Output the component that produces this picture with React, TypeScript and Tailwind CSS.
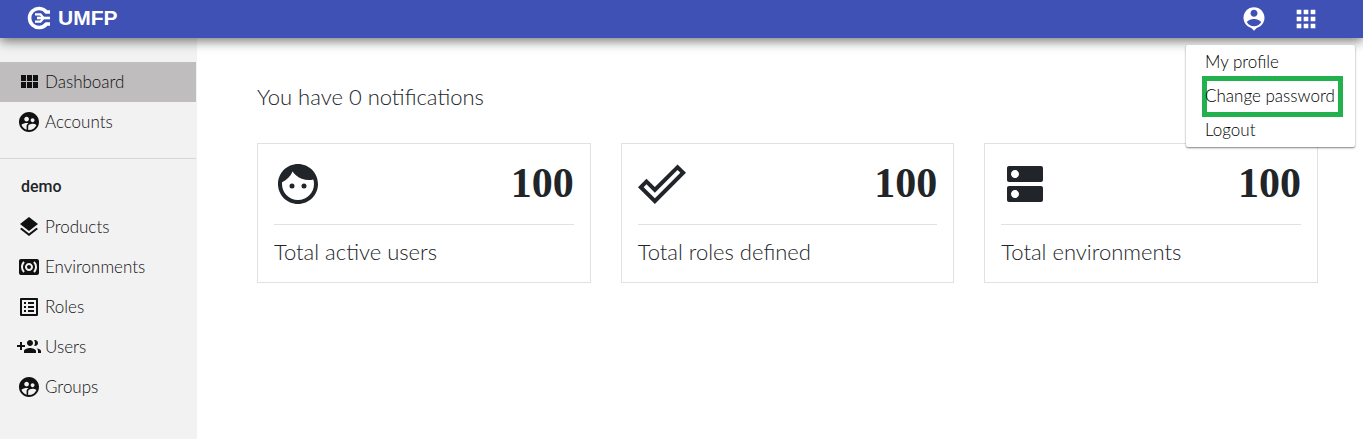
import type { ReactNode } from 'react'
import {
  MdApps,
  MdDns,
  MdDoneOutline,
  MdFace,
  MdLayers,
  MdListAlt,
  MdSupervisedUserCircle,
  MdSurroundSound,
} from 'react-icons/md'

interface NavItem {
  label: string
  icon: ReactNode
  active?: boolean
}

/** Wraps a single 24x24 glyph path */
function Glyph({ d, size }: { d: string; size: number }) {
  return (
    <svg viewBox="0 0 24 24" width={size} height={size} fill="currentColor" aria-hidden="true">
      <path d={d} />
    </svg>
  )
}

const GRID_PATH =
  'M4 11h5V5H4v6zm0 7h5v-6H4v6zm6 0h5v-6h-5v6zm6 0h5v-6h-5v6zm-6-7h5V5h-5v6zm6-6v6h5V5h-5z'
const GROUP_ADD_PATH =
  'M8 10H5V7H3v3H0v2h3v3h2v-3h3v-2zm10 1c1.66 0 2.99-1.34 2.99-3S19.66 5 18 5c-.32 0-.63.05-.91.14.57.81.9 1.79.9 2.86s-.34 2.04-.9 2.86c.28.09.59.14.91.14zm-5 0c1.66 0 2.99-1.34 2.99-3S14.66 5 13 5c-1.66 0-3 1.34-3 3s1.34 3 3 3zm6.62 2.16c.83.73 1.38 1.66 1.38 2.84v2h3v-2c0-1.54-2.37-2.49-4.38-2.84zM13 13c-2 0-6 1-6 3v2h12v-2c0-2-4-3-6-3z'
const PROFILE_PATH =
  'M12 2c-4.97 0-9 4.03-9 9 0 4.17 2.84 7.67 6.69 8.69L12 22l2.31-2.31C18.16 18.67 21 15.17 21 11c0-4.97-4.03-9-9-9zm0 2c1.66 0 3 1.34 3 3s-1.34 3-3 3-3-1.34-3-3 1.34-3 3-3zm0 14.3c-2.5 0-4.71-1.28-6-3.22.03-1.99 4-3.08 6-3.08 1.99 0 5.97 1.09 6 3.08-1.29 1.94-3.5 3.22-6 3.22z'

const MAIN_NAV: NavItem[] = [
  { label: 'Dashboard', icon: <Glyph d={GRID_PATH} size={24} />, active: true },
  { label: 'Accounts',  icon: <MdSupervisedUserCircle size={24} /> },
]

const DEMO_NAV: NavItem[] = [
  { label: 'Products',     icon: <MdLayers size={24} /> },
  { label: 'Environments', icon: <MdSurroundSound size={24} /> },
  { label: 'Roles',        icon: <MdListAlt size={24} /> },
  { label: 'Users',        icon: <Glyph d={GROUP_ADD_PATH} size={24} /> },
  { label: 'Groups',       icon: <MdSupervisedUserCircle size={24} /> },
]

const STATS = [
  { label: 'Total active users',  value: 100, icon: <MdFace size={48} /> },
  { label: 'Total roles defined', value: 100, icon: <MdDoneOutline size={48} /> },
  { label: 'Total environments',  value: 100, icon: <MdDns size={48} /> },
]

/** Open ring with a spanner head inside */
function Logo() {
  return (
    <svg viewBox="0 0 24 24" width="24" height="24" fill="none" stroke="currentColor" aria-hidden="true">
      <path d="M23 6H19.400A9.500 9.500 0 1 0 19.400 18H23" strokeWidth="3.600" />
      <path d="M8 8.400h5.500L16.500 12L13.500 15.600H8" strokeWidth="2.200" />
      <path d="M10 12h13" strokeWidth="2.600" />
    </svg>
  )
}

function NavList({ items }: { items: NavItem[] }) {
  return (
    <ul>
      {items.map(({ label, icon, active }) => (
        <li key={label}>
          <a
            href="#"
            aria-current={active ? 'page' : undefined}
            className={[
              'flex h-10 items-center gap-1 pl-[17px] text-[17px] text-[#111111]',
              active ? 'bg-[#bfbdbd]' : 'hover:bg-gray-200',
            ].join(' ')}
          >
            {icon}
            {label}
          </a>
        </li>
      ))}
    </ul>
  )
}

function UserMenu() {
  return (
    <div className="absolute top-[45px] right-2 z-20 flex w-[169px] flex-col rounded-xs bg-white text-[17px] font-light text-black shadow-[0_1px_2px_rgba(0,0,0,0.5)]">
      <button className="h-[34px] pl-[19px] text-left">My profile</button>
      <button className="-mt-[3px] mr-3 -mb-1 ml-4 h-[41px] pb-0.5 pl-[3px] text-left whitespace-nowrap shadow-[inset_0_0_0_5px_#22b14c]">
        Change password
      </button>
      <button className="h-[34px] pl-[19px] text-left">Logout</button>
    </div>
  )
}

export default function App() {
  return (
    <div className="flex min-h-screen flex-col bg-white font-['Lato',sans-serif] font-light text-[#212529]">

      {/* Top bar */}
      <header className="relative z-10 flex h-[38px] items-center bg-[#3f51b5] pr-[43px] pl-[27px] text-white shadow-[0_3px_12px_rgba(0,0,0,0.55)]">
        <a href="#" className="flex items-center gap-[7px] pb-0.5 font-['Liberation_Sans',sans-serif] text-[21px] leading-6 font-bold">
          <Logo />
          UMFP
        </a>
        <div className="ml-auto flex gap-6">
          <button aria-label="Profile"><Glyph d={PROFILE_PATH} size={28} /></button>
          <button aria-label="Apps"><MdApps size={28} /></button>
        </div>
        <UserMenu />
      </header>

      <div className="flex flex-1">
        {/* Sidebar */}
        <nav className="w-[197px] flex-none bg-[#f2f2f2] pt-6 pr-px">
          <NavList items={MAIN_NAV} />
          <hr className="mt-4 border-[#d6d6d6]" />
          <h2 className="flex h-12 items-center pt-2 pl-[21px] font-['Roboto',sans-serif] text-base font-medium">
            demo
          </h2>
          <NavList items={DEMO_NAV} />
        </nav>

        {/* Dashboard */}
        <main className="min-w-0 flex-1 pt-[43px] pr-[45px] pl-15">
          <h1 className="text-[22px] leading-8">You have 0 notifications</h1>
          <div className="mt-[30px] grid grid-cols-3 gap-[30px]">
            {STATS.map(({ label, value, icon }) => (
              <section key={label} className="h-[140px] border border-[#dee2e6] px-4 pt-4">
                <div className="flex h-[65px] items-start justify-between border-b border-[#dee2e6]">
                  {icon}
                  <span className="font-['Liberation_Serif',serif] text-[42px] leading-[46px] font-bold">{value}</span>
                </div>
                <p className="pt-[11px] text-[22px] leading-8">{label}</p>
              </section>
            ))}
          </div>
        </main>
      </div>
    </div>
  )
}
